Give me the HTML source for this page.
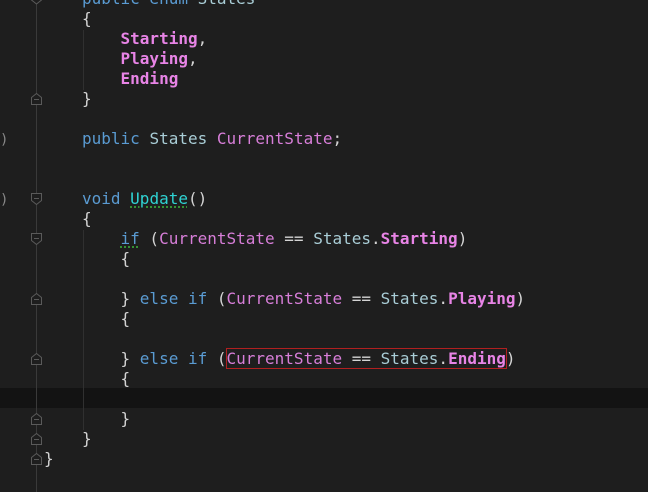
<!DOCTYPE html>
<html><head><style>
body{margin:0;width:648px;height:492px;background:#1e1e1e;overflow:hidden;position:relative;font-family:"DejaVu Sans Mono","Liberation Mono",monospace;font-size:16px}
.l{position:absolute;left:82px;height:20px;line-height:20px;white-space:pre;color:#d4d4d4}
.k{color:#5a9bd2}.t{color:#a9cdd6}.p{color:#d77ed8}.b{color:#e884e6;font-weight:bold}.u{color:#2fd3d3}.o{color:#d4d4d4}
.sq{text-decoration:underline dotted #3cb83c;text-underline-offset:3px}
</style></head><body>
<div style="position:absolute;left:0;top:388px;width:648px;height:20px;background:#131313"></div>
<div style="position:absolute;left:36px;top:0;width:1px;height:492px;background:#3a3a3a"></div>
<div style="position:absolute;left:83px;top:30px;width:1px;height:60px;background:#303030"></div>
<div style="position:absolute;left:83px;top:230px;width:1px;height:200px;background:#303030"></div>
<div style="position:absolute;left:0;top:132px;color:#888;font-size:14px">)</div>
<div style="position:absolute;left:0;top:192px;color:#888;font-size:14px">)</div>
<svg style="position:absolute;left:0;top:0" width="60" height="492">
<g fill="#1e1e1e" stroke="#5a5a5a" stroke-width="1">
<path d="M31.5 -6h10v6l-5 4l-5-4z"/>
<path d="M31.5 104.5h10v-7l-5-4l-5 4z"/>
<path d="M31.5 193.5h10v7l-5 4l-5-4z"/>
<path d="M31.5 233.5h10v7l-5 4l-5-4z"/>
<path d="M31.5 304.5h10v-7l-5-4l-5 4z"/>
<path d="M31.5 364.5h10v-7l-5-4l-5 4z"/>
<path d="M31.5 424.5h10v-7l-5-4l-5 4z"/>
<path d="M31.5 444.5h10v-7l-5-4l-5 4z"/>
<path d="M31.5 464.5h10v-7l-5-4l-5 4z"/>
</g>
<g stroke="#5a5a5a"><path d="M34 -2h5M34 99.5h5M34 198.5h5M34 238.5h5M34 299.5h5M34 359.5h5M34 419.5h5M34 439.5h5M34 459.5h5"/></g>
</svg>
<div class="l" style="top:-11px"><span class="k">public enum</span> <span class="t">States</span></div>
<div class="l" style="top:9px">{</div>
<div class="l" style="top:29px">    <span class="b">Starting</span>,</div>
<div class="l" style="top:49px">    <span class="b">Playing</span>,</div>
<div class="l" style="top:69px">    <span class="b">Ending</span></div>
<div class="l" style="top:89px">}</div>
<div class="l" style="top:129px"><span class="k">public</span> <span class="t">States</span> <span class="p">CurrentState</span>;</div>
<div class="l" style="top:189px"><span class="k">void</span> <span class="u sq">Update</span>()</div>
<div class="l" style="top:209px">{</div>
<div class="l" style="top:229px">    <span class="k sq">if</span> (<span class="p">CurrentState</span> == <span class="t">States</span>.<span class="b">Starting</span>)</div>
<div class="l" style="top:249px">    {</div>
<div class="l" style="top:289px">    } <span class="k">else if</span> (<span class="p">CurrentState</span> == <span class="t">States</span>.<span class="b">Playing</span>)</div>
<div class="l" style="top:309px">    {</div>
<div class="l" style="top:349px">    } <span class="k">else if</span> (<span style="outline:1px solid #b02020"><span class="p">CurrentState</span> == <span class="t">States</span>.<span class="b">Ending</span></span>)</div>
<div class="l" style="top:369px">    {</div>
<div class="l" style="top:409px">    }</div>
<div class="l" style="top:429px">}</div>
<div class="l" style="top:449px;left:44px">}</div>
</body></html>
